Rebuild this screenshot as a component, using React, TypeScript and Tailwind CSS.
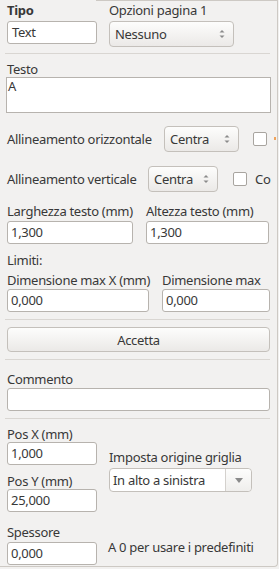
import React from 'react';

function Field({ value = '', w, h = 23, pad = 3 }: { value?: string; w: number; h?: number; pad?: number }) {
    return (
        <div
            className="border border-[#b7b3ae] rounded-[3px] bg-white leading-[21px] whitespace-nowrap overflow-hidden shrink-0"
            style={{ width: w, height: h, paddingLeft: pad }}
        >
            {value}
        </div>
    );
}

function Spin({ value, w }: { value: string; w: number }) {
    return (
        <div
            className="h-[26px] border border-[#c4c0bb] rounded-[4px] bg-gradient-to-b from-[#fdfdfc] to-[#ebe9e7] flex items-center justify-between pl-[5px] pr-[8px] shrink-0"
            style={{ width: w }}
        >
            <span>{value}</span>
            <svg width="6" height="10" viewBox="0 0 6 10">
                <path d="M3 1 L5.5 3.5 L0.5 3.5 Z" fill="#8a8a8a" />
                <path d="M3 9 L5.5 6.5 L0.5 6.5 Z" fill="#8a8a8a" />
            </svg>
        </div>
    );
}

function Check() {
    return <div className="w-[14px] h-[14px] border border-[#a8a49f] rounded-[2px] bg-white shrink-0" />;
}

function Sep() {
    return <div className="h-px bg-[#d9d6d2] ml-[-2px] w-[265px]" />;
}

export default function App() {
    return (
        <div className="w-[279px] h-[569px] bg-[#f2f1f0] overflow-hidden text-[#383838] text-[13px] leading-[16px] font-['Noto_Sans',sans-serif] tracking-[-0.3px]">
            <div className="w-[278px] h-[567px] border-r border-b border-[#cdc9c4] rounded-br-[4px] overflow-hidden">
                {/* top edge of the frame */}
                <div className="h-px ml-[96px] bg-[#cdc9c4]" />
                <div className="pl-[7px] w-[290px]">
                    <div className="flex mt-[1px]">
                        <div className="w-[102px]">
                            <div className="font-bold">Tipo</div>
                            <div className="mt-[3px]">
                                <Field value="Text" w={90} pad={4} />
                            </div>
                        </div>
                        <div>
                            <div>Opzioni pagina 1</div>
                            <div className="mt-[3px]">
                                <Spin value="Nessuno" w={125} />
                            </div>
                        </div>
                    </div>

                    <div className="mt-[6px]">
                        <Sep />
                    </div>

                    <div className="mt-[7px]">Testo</div>
                    <div className="ml-[-1px]">
                        <div className="w-[265px] h-[36px] border border-[#b7b3ae] bg-white pl-[1px]">A</div>
                    </div>

                    <div className="flex items-center mt-[13px] whitespace-nowrap">
                        <span className="w-[157px] shrink-0">Allineamento orizzontale</span>
                        <Spin value="Centra" w={75} />
                        <div className="ml-[14px]">
                            <Check />
                        </div>
                        <div className="ml-[7px] mt-[-2px] w-[2px] h-[3px] bg-[#f0a35a]" />
                    </div>

                    <div className="flex items-center mt-[14px] whitespace-nowrap">
                        <span className="w-[141px] shrink-0">Allineamento verticale</span>
                        <Spin value="Centra" w={70} />
                        <div className="ml-[15px]">
                            <Check />
                        </div>
                        <span className="ml-[8px]">Co</span>
                    </div>

                    <div className="flex mt-[11px] whitespace-nowrap">
                        <div className="w-[139px]">
                            <div>Larghezza testo (mm)</div>
                            <div className="mt-[2px]">
                                <Field value="1,300" w={126} />
                            </div>
                        </div>
                        <div>
                            <div>Altezza testo (mm)</div>
                            <div className="mt-[2px]">
                                <Field value="1,300" w={123} />
                            </div>
                        </div>
                    </div>

                    <div className="mt-[8px]">Limiti:</div>

                    <div className="flex mt-[4px] whitespace-nowrap">
                        <div className="w-[155px]">
                            <div>Dimensione max X (mm)</div>
                            <div className="mt-[1px]">
                                <Field value="0,000" w={142} />
                            </div>
                        </div>
                        <div>
                            <div>Dimensione max</div>
                            <div className="mt-[1px]">
                                <Field value="0,000" w={108} />
                            </div>
                        </div>
                    </div>

                    <div className="mt-[7px]">
                        <Sep />
                    </div>

                    <div className="mt-[7px] w-[263px] h-[25px] border border-[#c4c0bb] rounded-[4px] bg-gradient-to-b from-[#fdfdfc] to-[#ebe9e7] flex items-center justify-center">
                        Accetta
                    </div>

                    <div className="mt-[7px]">
                        <Sep />
                    </div>

                    <div className="mt-[11px]">Commento</div>
                    <div className="mt-[1px]">
                        <Field w={263} />
                    </div>

                    <div className="mt-[7px]">
                        <Sep />
                    </div>

                    <div className="flex mt-[7px] whitespace-nowrap">
                        <div className="w-[102px]">
                            <div>Pos X (mm)</div>
                            <Field value="1,000" w={90} />
                            <div className="mt-[8px]">Pos Y (mm)</div>
                            <Field value="25,000" w={90} />
                        </div>
                        <div className="mt-[23px]">
                            <div>Imposta origine griglia</div>
                            <div className="mt-[3px] w-[143px] h-[24px] border border-[#c4c0bb] rounded-[4px] bg-white flex">
                                <span className="flex-1 pl-[3px] leading-[22px]">In alto a sinistra</span>
                                <div className="w-[26px] border-l border-[#d4d1cd] bg-gradient-to-b from-[#fdfdfc] to-[#efeeec] rounded-r-[4px] flex items-center justify-center">
                                    <svg width="8" height="5" viewBox="0 0 8 5">
                                        <path d="M0 0 H8 L4 5 Z" fill="#8a8a8a" />
                                    </svg>
                                </div>
                            </div>
                        </div>
                    </div>

                    <div className="flex mt-[12px] whitespace-nowrap">
                        <div className="w-[101px]">
                            <div>Spessore</div>
                            <div className="mt-[2px]">
                                <Field value="0,000" w={90} />
                            </div>
                        </div>
                        <div className="mt-[15px]">A 0 per usare i predefiniti</div>
                    </div>
                </div>
            </div>
        </div>
    );
}
